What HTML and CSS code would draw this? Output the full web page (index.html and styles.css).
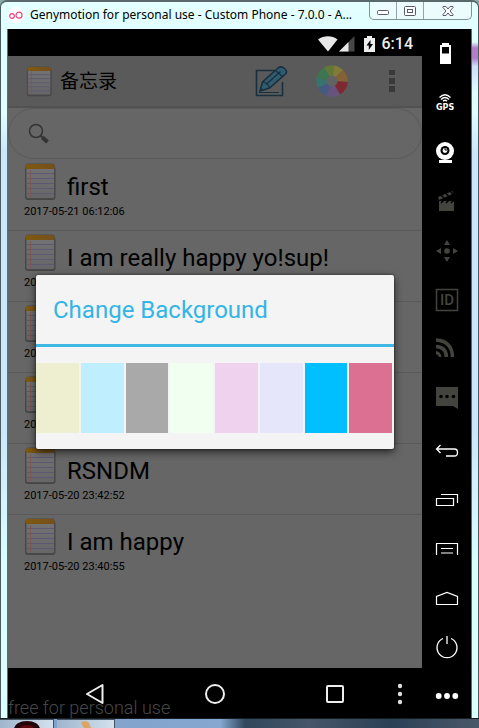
FILE: index.html
```html
<!DOCTYPE html>
<html lang="zh">
<head>
<meta charset="utf-8">
<meta name="viewport" content="width=device-width, initial-scale=1">
<title>Genymotion</title>
<link rel="stylesheet" href="styles.css">
</head>
<body>
<svg class="defs" aria-hidden="true">
  <defs>
    <linearGradient id="gold" x1="0" x2="1" y1="0" y2="0"><stop offset="0" stop-color="#80590f"/><stop offset="1" stop-color="#74501d"/></linearGradient>
    <linearGradient id="paper" x1="0" x2="0" y1="0" y2="1"><stop offset="0" stop-color="#747376"/><stop offset="1" stop-color="#666568"/></linearGradient>
  </defs>
  <symbol id="note" viewBox="0 0 32 38">
    <rect x="1" y="3" width="30.500" height="34" rx="3" fill="#454545"/>
    <rect x="2" y="1" width="28.500" height="34.500" rx="2" fill="url(#paper)" stroke="#4b4b4b" stroke-width="1"/>
    <path d="M2 6V3q0-2 2-2h24.500q2 0 2 2v3z" fill="url(#gold)"/>
    <path d="M3 10.500h27M3 15.500h27M3 20.500h27M3 25.500h27M3 30.500h27" stroke="#5b5a70"/>
    <path d="M6.500 7v27" stroke="#7c5554"/>
  </symbol>
</svg>
<div class="window">
  <header class="titlebar">
    <svg class="logo" width="16" height="16" viewBox="0 0 16 16"><circle cx="8" cy="8" r="8" fill="#fff"/><g fill="none" stroke="#e8457f" stroke-width="1.200"><circle cx="4" cy="9" r="2.300"/><circle cx="11" cy="8.200" r="3"/></g></svg>
    <h1>Genymotion for personal use - Custom Phone - 7.0.0 - A...</h1>
    <div class="controls">
      <button aria-label="Minimize"><svg width="14" height="12"><rect x="1.500" y="5.500" width="11" height="4" rx="1" fill="#fff" stroke="#555a6c"/></svg></button>
      <button aria-label="Maximize"><svg width="14" height="12"><rect x="1.500" y="1.500" width="11" height="9" rx="1" fill="#fff" stroke="#555a6c"/><rect x="4.500" y="4.500" width="5" height="3" fill="#fff" stroke="#555a6c"/></svg></button>
      <button class="close" aria-label="Close"><svg width="14" height="12"><path d="M2 1.500h3l2 2.500 2-2.500h3v1L9 6l3 3.500v1H9L7 8l-2 2.500H2v-1L5 6 2 2.500z" fill="#fff" stroke="#555a6c"/></svg></button>
    </div>
  </header>
  <div class="device">
    <main class="phone">
      <div class="status">
        <svg width="20" height="16"><path d="M0 3.500C6-.8 14-.8 19.500 3.500L10 15.500z" fill="#e8e8e8"/></svg>
        <svg width="16" height="16"><path d="M15.500 0v15.500H0z" fill="#474747"/><path d="M9.500 6v9.500H0z" fill="#e8e8e8"/></svg>
        <svg class="charge" width="11" height="16"><path d="M0 2h3V0h5v2h3v14H0z" fill="#eee"/><path d="M6.500 4L2.500 9.500h2.300V14L9 8H6.500z" fill="#000"/></svg>
        <time>6:14</time>
      </div>
      <section class="app">
        <div class="appbar">
          <svg class="app-icon" width="26" height="31"><use href="#note"/></svg>
          <h2>备忘录</h2>
          <button class="pen" aria-label="New note"><svg width="33" height="32" viewBox="0 0 33 32"><path d="M20 5.500H1.500v25H27.500V17" fill="none" stroke="#182f40" stroke-width="1.600"/><path d="M4 27.500h20" stroke="#182f40"/><path d="M5 26l2.500-9L23 3Q26 .5 29.500 3.500T30.500 9L14.500 23z" fill="#315c6e" stroke="#182f40" stroke-width="1.600"/><path d="M7.500 17q5.500 .5 7 6M11 19.500L25.500 6.500M20.500 5.500l7.500 6.500" fill="none" stroke="#182f40" stroke-width="1.200"/><path d="M5 26l3.500-1L6 22.500z" fill="#182f40"/></svg></button>
          <button class="palette" aria-label="Change background"><svg width="32" height="32" viewBox="-16 -16 32 32">
            <path d="M0 0L-8-13.500A15.700 15.700 0 0 1 2-15.600z" fill="#62783a"/><path d="M0 0L2-15.600A15.700 15.700 0 0 1 11-11z" fill="#827b37"/><path d="M0 0L11-11A15.700 15.700 0 0 1 15.700 1z" fill="#846137"/><path d="M0 0L15.700 1A15.700 15.700 0 0 1 8 13.500z" fill="#7e2830"/><path d="M0 0L8 13.500A15.700 15.700 0 0 1-6 14.500z" fill="#66547f"/><path d="M0 0L-6 14.500A15.700 15.700 0 0 1-14 7z" fill="#435a82"/><path d="M0 0L-14 7A15.700 15.700 0 0 1-15.500-3z" fill="#39736f"/><path d="M0 0L-15.500-3A15.700 15.700 0 0 1-8-13.500z" fill="#3d7550"/>
            <circle r="5.500" fill="#626262"/></svg></button>
          <button class="more" aria-label="More options"><svg width="6" height="22"><path d="M0 0h6v5H0zM0 8h6v6H0zM0 16h6v6H0z" fill="#393939"/></svg></button>
        </div>
        <label class="search">
          <svg width="22" height="22" viewBox="0 0 22 22"><circle cx="8" cy="8" r="6.500" fill="none" stroke="#333" stroke-width="1.500"/><path d="M12.500 12.500l2.500 2.500" stroke="#333" stroke-width="2"/><path d="M14.500 14.500l5 4.500" stroke="#333" stroke-width="4"/></svg>
          <input type="search" aria-label="Search notes">
        </label>
        <ul class="notes">
          <li><div class="head"><svg width="32" height="38"><use href="#note"/></svg><h3>first</h3></div><time>2017-05-21 06:12:06</time></li>
          <li><div class="head"><svg width="32" height="38"><use href="#note"/></svg><h3>I am really happy yo!sup!</h3></div><time>2017-05-21</time></li>
          <li><div class="head"><svg width="32" height="38"><use href="#note"/></svg></div><time>2017-05-21</time></li>
          <li><div class="head"><svg width="32" height="38"><use href="#note"/></svg></div><time>2017-05-20</time></li>
          <li><div class="head"><svg width="32" height="38"><use href="#note"/></svg><h3>RSNDM</h3></div><time>2017-05-20 23:42:52</time></li>
          <li><div class="head"><svg width="32" height="38"><use href="#note"/></svg><h3>I am happy</h3></div><time>2017-05-20 23:40:55</time></li>
        </ul>
        <div class="overlay">
          <div class="dialog" role="dialog" aria-labelledby="dialog-title">
            <h2 id="dialog-title">Change Background</h2>
            <div class="swatches">
              <button class="khaki" aria-label="Khaki"></button><button class="sky" aria-label="Light blue"></button><button class="gray" aria-label="Gray"></button><button class="mint" aria-label="Mint"></button><button class="pink" aria-label="Pink"></button><button class="lavender" aria-label="Lavender"></button><button class="azure" aria-label="Deep blue"></button><button class="rose" aria-label="Rose"></button>
            </div>
          </div>
        </div>
      </section>
      <nav class="nav">
        <button class="nav-back" aria-label="Back"><svg width="20" height="22"><path d="M17.500 2v18L2 11z" fill="none" stroke="#eee" stroke-width="2" stroke-linejoin="round"/></svg></button>
        <button aria-label="Home"><svg width="22" height="22"><circle cx="11" cy="11" r="9" fill="none" stroke="#eee" stroke-width="2"/></svg></button>
        <button aria-label="Recent apps"><svg width="20" height="20"><rect x="2" y="2" width="16" height="16" rx="1" fill="none" stroke="#eee" stroke-width="2"/></svg></button>
        <button class="dots" aria-label="Menu"><svg width="10" height="22"><g fill="#ddd"><circle cx="5" cy="3" r="2.200"/><circle cx="5" cy="11" r="2.200"/><circle cx="5" cy="19" r="2.200"/></g></svg></button>
      </nav>
      <p class="watermark">free for personal use</p>
    </main>
    <aside class="tools">
      <button aria-label="Battery"><svg viewBox="0 0 49 49"><path d="M18 16h2v-2h7v2h2v19H18zM20 18v6.500h7V18z" fill="#fff" fill-rule="evenodd"/></svg></button>
      <button aria-label="GPS"><svg viewBox="0 0 49 49"><g fill="none" stroke="#fff" stroke-width="1.300"><path d="M17.500 19.500Q23 14 28.500 19.500M19 21.500q4-4 8 0M21 23.300q2-2 4 0"/></g><text class="gps" x="14" y="32">GPS</text></svg></button>
      <button aria-label="Camera"><svg viewBox="0 0 49 49"><circle cx="23" cy="24" r="9" fill="#fff"/><circle cx="23" cy="23.500" r="4.500"/><circle cx="23" cy="23.500" r="2.400" fill="#fff"/><path d="M22 22h2v2" fill="none" stroke="#000"/><path d="M17 33h13v3H17z" fill="#fff"/></svg></button>
      <button aria-label="Screencast"><svg viewBox="0 0 49 49"><path d="M17 25h15v10H17zM16 21l14.500-6 1 2.500L17 24z" fill="#44443f"/><path d="M19 27l3-3M24 27l3-3M29 27l3-3M19 19l3 3M23.500 17l3 3M28 15l3 3" stroke="#000" stroke-width="1.500"/></svg></button>
      <button aria-label="Move"><svg viewBox="0 0 49 49"><path d="M25 15l3 5h-6zM25 37l3-5h-6zM14 26l5-3v6zM36 26l-5-3v6z" fill="#44443f"/><circle cx="25" cy="26" r="2.800" fill="#44443f"/></svg></button>
      <button aria-label="Identifiers"><svg viewBox="0 0 49 49"><rect x="14.500" y="15.500" width="21" height="21" fill="none" stroke="#44443f" stroke-width="1.500"/><text class="id" x="25" y="31">ID</text></svg></button>
      <button aria-label="Network"><svg viewBox="0 0 49 49"><g fill="none" stroke="#44443f" stroke-width="3.500"><path d="M14 17q16 1 16.500 17M14 23.500q10 .5 10.500 10.500"/></g><path d="M14 28q5 1 5.500 6H17q-.5-2-3-3z" fill="#44443f"/></svg></button>
      <button aria-label="Phone and SMS"><svg viewBox="0 0 49 49"><path d="M14 15h22v22l-5-3H14z" fill="#44443f"/><g><circle cx="19" cy="24.500" r="1.800"/><circle cx="25" cy="24.500" r="1.800"/><circle cx="31.500" cy="24.500" r="1.800"/></g></svg></button>
      <button aria-label="Back"><svg viewBox="0 0 49 49"><path d="M18.500 24L14.500 28l4 4M15 28h17.500q3 0 3 3.500t-3 3.500H24" fill="none" stroke="#fff" stroke-width="1.300"/></svg></button>
      <button aria-label="Recents"><svg viewBox="0 0 49 49"><path d="M14.500 28.500h17v7h-17zM19 24.500h16.500V33" fill="none" stroke="#fff" stroke-width="1.200"/></svg></button>
      <button aria-label="Menu"><svg viewBox="0 0 49 49"><path d="M14.500 36V24.500h21V36M19 29.500h12M19 34h12" fill="none" stroke="#fff" stroke-width="1.200"/></svg></button>
      <button aria-label="Home"><svg viewBox="0 0 49 49"><path d="M14.500 36.500v-8L25 24.500l10.500 4v8z" fill="none" stroke="#fff" stroke-width="1.200"/></svg></button>
      <button aria-label="Power"><svg viewBox="0 0 49 49"><path d="M21 21.500A10 10 0 1 0 29 21.500M25 19v8" fill="none" stroke="#fff" stroke-width="1.300"/></svg></button>
      <button aria-label="More"><svg viewBox="0 0 49 49"><g fill="#fff"><circle cx="16.700" cy="30" r="2.900"/><circle cx="25" cy="30" r="2.900"/><circle cx="33.300" cy="30" r="2.900"/></g></svg></button>
    </aside>
  </div>
</div>
<footer class="taskbar">
  <span class="task"><svg width="26" height="8"><ellipse cx="13" cy="9" rx="13" ry="8" fill="#220408"/><ellipse cx="13" cy="9" rx="7" ry="4" fill="#5e0710"/></svg></span>
  <span class="task"><svg width="12" height="8"><path d="M1 3q4-4 8 0l2 5H4z" fill="#dda564"/></svg></span>
</footer>
</body>
</html>
```
FILE: styles.css
```css
* { box-sizing: border-box; }
body {
  margin: 0;
  min-height: 100vh;
  display: flex;
  flex-direction: column;
  background: #8aa9a9;
  font-family: Roboto, "Noto Sans CJK SC", sans-serif;
}
h1, h2, h3, p, ul { margin: 0; padding: 0; font-weight: 400; }
ul { list-style: none; }
button { padding: 0; border: 0; background: none; display: grid; place-items: center; }
svg { display: block; }
.defs { position: absolute; width: 0; height: 0; }

.window {
  flex: 1;
  display: flex;
  flex-direction: column;
  padding: 0 6px;
  border: 1px solid #4d5b60;
  border-top: 2px solid #59696b;
  border-bottom: 0;
  border-radius: 7px 7px 0 0;
  background:
    linear-gradient(transparent 40px, #b07fc6 46px, #b07fc6 56px, #cfdcfa 64px, transparent 90px) right / 6px 100% no-repeat,
    linear-gradient(#e4ffff, #dcffff 60px, #e0ffff 110px, #c9e8fd 150px, #c9e8fd 430px, #d9ffff 560px, #dcffff);
}
.titlebar { display: flex; height: 27px; align-items: flex-start; }
.logo { margin: 5px 6px 0 1px; }
.titlebar h1 {
  flex: 1;
  min-width: 0;
  font: 12px/26px "Noto Sans", "Open Sans", sans-serif;
  color: #000;
  white-space: nowrap;
}
.controls {
  display: flex;
  border: 1px solid #7f9297;
  border-top: 0;
  border-radius: 0 0 5px 5px;
  background: #ecfcfd;
}
.controls button { width: 27px; height: 17px; border-right: 1px solid #93a5a9; }
.controls .close { width: 47px; border-right: 0; }

.device { flex: 1; display: flex; border: 1px solid #5c6d73; border-width: 0 1px; background: #000; }
.phone { flex: 1; display: flex; flex-direction: column; position: relative; }
.status { display: flex; align-items: center; justify-content: flex-end; gap: 1px; height: 27px; padding: 2px 9px 0 0; color: #eee; }
.status time { font-size: 16px; line-height: 20px; font-weight: 500; }
.charge { margin: 0 6px 0 8px; }

.app { flex: 1; position: relative; background: #666; }
.appbar {
  display: flex;
  align-items: center;
  height: 52px;
  padding: 0 27px 0 18px;
  background: #5a5a5a;
  border-bottom: 2px solid #525252;
}
.appbar h2 { flex: 1; padding: 2px 0 0 8px; font-size: 19px; line-height: 24px; }
.palette { margin: 0 41px 0 28px; }

.search { display: flex; align-items: center; height: 51px; padding: 0 19px; border: 1px solid #5a5a5a; border-radius: 26px; }
.search input { flex: 1; min-width: 0; margin-left: 10px; border: 0; outline: 0; background: none; font: inherit; }

.notes { padding-top: 1px; }
.notes li { height: 71px; padding: 3px 16px 0; border-bottom: 1px solid #5a5a5a; }
.notes li:last-child { border-bottom: 0; }
.head { display: flex; gap: 11px; height: 38px; }
.notes h3 { padding-top: 10px; font-size: 24px; line-height: 28px; white-space: nowrap; }
.notes time { display: block; font-size: 11px; line-height: 22px; }

.overlay { position: absolute; inset: 0; display: grid; align-items: center; padding: 0 28px; }
.dialog { padding-bottom: 16px; border-radius: 2px; background: #f4f4f4; box-shadow: 0 3px 8px rgba(0, 0, 0, .65), 0 0 2px #222; }
.dialog h2 { padding: 1px 17px 0; border-bottom: 3px solid #3fb8e6; font-size: 24px; line-height: 68px; color: #33b5e5; }
.swatches { display: flex; gap: 2px; height: 86px; padding: 16px 2px 0 0; }
.swatches button { flex: 1; }
.khaki { background: #eeeed1; }
.sky { background: #bfefff; }
.gray { background: #a9a9a9; }
.mint { background: #f0fff0; }
.pink { background: #eed2ee; }
.lavender { background: #e6e6fa; }
.azure { background: #00bfff; }
.rose { background: #db7093; }

.nav { display: grid; grid-template-columns: 27px 1fr 1fr 1fr 27px; align-items: center; height: 50px; padding-top: 2px; }
.nav-back { grid-column: 2; }
.dots { justify-items: start; }
.watermark { position: absolute; left: 0; bottom: 0; font-size: 18px; line-height: 20px; font-weight: 300; color: #484848; }

.tools { width: 49px; }
.tools button, .tools svg { width: 49px; height: 49px; }
.gps { font: 700 8px "DejaVu Sans", sans-serif; fill: #fff; }
.id { font: 500 15px Roboto, sans-serif; fill: #44443f; text-anchor: middle; }

.taskbar {
  display: flex;
  gap: 3px;
  height: 10px;
  border-top: 1px solid #171d20;
  background: linear-gradient(90deg, #7ea0c8, #86a8d0 220px, #31475c 245px, #465568 310px, #2a4055 390px, #4a5869);
}
.task { display: grid; place-items: center; width: 54px; border: 1px solid #43515e; border-width: 1px 1px 0 0; background: linear-gradient(90deg, #9eb5cc, #d4e1ee); }
.task + .task { width: 58px; }
```
